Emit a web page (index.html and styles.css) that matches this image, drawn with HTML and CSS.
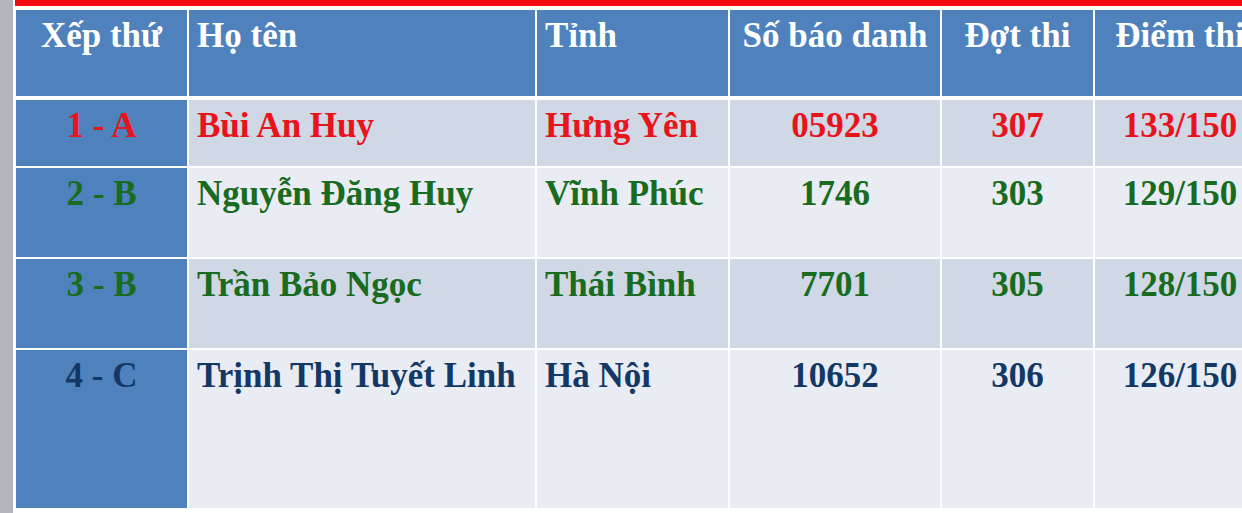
FILE: index.html
```html
<!DOCTYPE html>
<html lang="vi">
<head>
<meta charset="utf-8">
<title>Bảng xếp hạng</title>
<link rel="stylesheet" href="styles.css">
</head>
<body>
<div class="page">
  <div class="strip"></div>
  <div class="main">
    <div class="redbar"></div>
    <table class="ranking">
      <colgroup>
        <col class="c1"><col class="c2"><col class="c3"><col class="c4"><col class="c5"><col class="c6">
      </colgroup>
      <thead>
        <tr>
          <th class="center">Xếp thứ</th>
          <th class="left">Họ tên</th>
          <th class="left">Tỉnh</th>
          <th class="center">Số báo danh</th>
          <th class="center">Đợt thi</th>
          <th class="center">Điểm thi</th>
        </tr>
      </thead>
      <tbody>
        <tr class="r1 odd red">
          <td class="rank">1 - A</td>
          <td class="left">Bùi An Huy</td>
          <td class="left">Hưng Yên</td>
          <td class="center">05923</td>
          <td class="center">307</td>
          <td class="center">133/150</td>
        </tr>
        <tr class="r2 even green">
          <td class="rank">2 - B</td>
          <td class="left">Nguyễn Đăng Huy</td>
          <td class="left">Vĩnh Phúc</td>
          <td class="center">1746</td>
          <td class="center">303</td>
          <td class="center">129/150</td>
        </tr>
        <tr class="r3 odd green">
          <td class="rank">3 - B</td>
          <td class="left">Trần Bảo Ngọc</td>
          <td class="left">Thái Bình</td>
          <td class="center">7701</td>
          <td class="center">305</td>
          <td class="center">128/150</td>
        </tr>
        <tr class="r4 even navy">
          <td class="rank">4 - C</td>
          <td class="left">Trịnh Thị Tuyết Linh</td>
          <td class="left">Hà Nội</td>
          <td class="center">10652</td>
          <td class="center">306</td>
          <td class="center">126/150</td>
        </tr>
      </tbody>
    </table>
  </div>
</div>
</body>
</html>
```
FILE: styles.css
```css
html, body {
  margin: 0;
  padding: 0;
  background: #ffffff;
}
body {
  font-family: "Liberation Serif", "Times New Roman", serif;
  font-weight: bold;
}
.page {
  display: flex;
  width: 1242px;
  height: 513px;
  overflow: hidden;
}
.strip {
  width: 13px;
  flex: 0 0 13px;
  background: #b4b6bb;
}
.main {
  flex: 1;
  margin-left: 2px;
  overflow: hidden;
}
.redbar {
  height: 6px;
  background: #f40a0f;
}
.ranking {
  margin-top: 2px;
  margin-left: -1px;
  border-collapse: separate;
  border-spacing: 2px;
  table-layout: fixed;
  width: 1253px;
}
.c1 { width: 171px; }
.c2 { width: 346px; }
.c3 { width: 191px; }
.c4 { width: 210px; }
.c5 { width: 151px; }
.c6 { width: 170px; }
.ranking th,
.ranking td {
  box-sizing: border-box;
  vertical-align: top;
  padding: 0;
  white-space: nowrap;
}
.ranking th {
  height: 88px;
  background: #4f81bd;
  color: #ffffff;
  font-size: 35px;
  padding-top: 6px;
  border-bottom: 2px solid #ffffff;
}
.ranking td {
  font-size: 35px;
  padding-top: 6px;
}
.left { text-align: left; padding-left: 8px !important; }
.center { text-align: center; }
.ranking td.rank {
  background: #4f81bd;
  text-align: center;
}
.odd td { background: #d0d7e5; }
.even td { background: #e9ecf3; }
.r1 td { height: 66px; }
.r2 td { height: 89px; }
.r3 td { height: 89px; }
.r4 td { height: 158px; }
.red td { color: #e8141c; }
.green td { color: #186b1f; }
.navy td { color: #143865; }
```
